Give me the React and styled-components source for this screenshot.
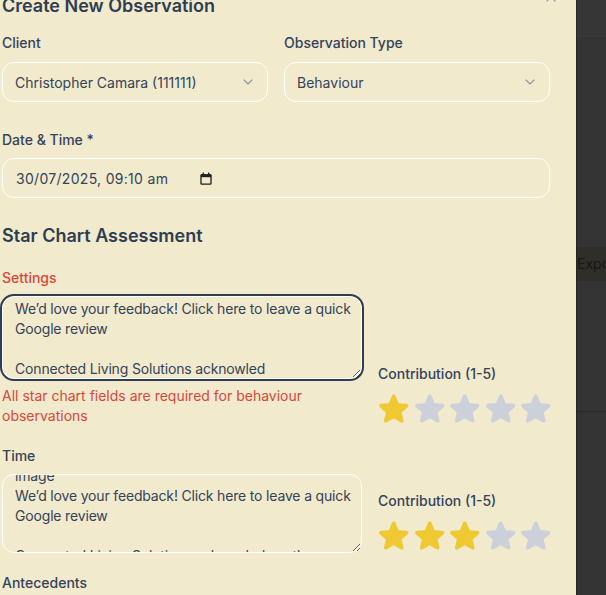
import React, { useLayoutEffect, useRef } from "react";
import styled, { createGlobalStyle } from "styled-components";

const GlobalStyle = createGlobalStyle`
  html, body {
    margin: 0;
    padding: 0;
    background: #333333;
  }
  body {
    font-family: Inter, "Noto Sans", "Liberation Sans", sans-serif;
  }
  * {
    box-sizing: border-box;
  }
`;

const Screen = styled.div`
  display: flex;
  width: 606px;
  height: 595px;
  overflow: hidden;
`;

const Panel = styled.div`
  width: 576px;
  flex-shrink: 0;
  height: 595px;
  overflow: hidden;
  background: #f1eacd;
  box-shadow: 1px 0 0 rgba(0, 0, 0, 0.25);
  position: relative;
  z-index: 1;
`;

const PanelInner = styled.div`
  padding: 24px 26px 40px 2px;
  color: #2f3d52;
`;

const Header = styled.div`
  display: flex;
  justify-content: space-between;
  align-items: flex-start;
  margin-bottom: 13px;
`;

const Title = styled.h2`
  margin: 0;
  font-size: 18px;
  line-height: 28px;
  font-weight: 600;
`;

const CloseButton = styled.button`
  border: 0;
  background: none;
  padding: 0;
  margin: -3px -9px 0 0;
  width: 16px;
  height: 16px;
  color: #9ca3af;
  display: flex;
`;

const TwoCol = styled.div`
  display: grid;
  grid-template-columns: 1fr 1fr;
  gap: 16px;
  margin-bottom: ${({ $mb }) => $mb || 0}px;
`;

const Field = styled.div`
  display: flex;
  flex-direction: column;
  margin-bottom: ${({ $mb }) => $mb || 0}px;
`;

const Label = styled.label`
  display: block;
  font-size: 14px;
  line-height: 20px;
  font-weight: 500;
  color: ${({ $error }) => ($error ? "#d9473b" : "#34435a")};
  margin-bottom: ${({ $mb }) => ($mb === undefined ? 8 : $mb)}px;
`;

const SelectWrap = styled.div`
  position: relative;
  height: 40px;
`;

const Select = styled.select`
  appearance: none;
  width: 100%;
  height: 40px;
  border: 1px solid #ffffff;
  border-radius: 12px;
  background: transparent;
  padding: 0 36px 0 12px;
  font-family: inherit;
  font-size: 14px;
  color: #34435a;
  outline: none;
`;

const Chevron = styled.span`
  position: absolute;
  right: 12px;
  top: 12px;
  display: flex;
  color: #8e929a;
  pointer-events: none;
`;

const DateField = styled.div`
  display: flex;
  align-items: center;
  height: 40px;
  border: 1px solid #ffffff;
  border-radius: 12px;
  padding: 0 12px 0 13px;
  font-size: 14px;
  color: #34435a;
`;

const DateText = styled.span`
  width: 184px;
  letter-spacing: 0.3px;
`;

const SectionTitle = styled.h3`
  margin: 0 0 18px;
  font-size: 18px;
  line-height: 28px;
  font-weight: 600;
`;

const StarRow = styled.div`
  display: grid;
  grid-template-columns: 1fr 172px;
  column-gap: 16px;
  align-items: end;
  margin-bottom: 20px;
`;

const TextArea = styled.textarea`
  display: block;
  width: 100%;
  height: ${({ $h }) => $h}px;
  border: 1px solid #ffffff;
  border-radius: 12px;
  background: transparent;
  padding: 8px 6px 8px 12px;
  font-family: inherit;
  font-size: 14px;
  line-height: 20px;
  letter-spacing: -0.17px;
  color: #34435a;
  resize: vertical;
  scrollbar-width: none;
  outline: ${({ $focused }) => ($focused ? "2px solid #2f3d52" : "none")};
  outline-offset: 0;
`;

const ErrorText = styled.p`
  margin: 7px 0 0;
  font-size: 14px;
  line-height: 20px;
  color: #d9473b;
`;

const Rating = styled.div`
  display: flex;
  flex-direction: column;
`;

const Stars = styled.div`
  display: flex;
  margin: 7px 0 0 -2px;
`;

const StarButton = styled.button`
  border: 0;
  background: none;
  padding: 0;
  width: 35.5px;
  height: 35.5px;
  display: flex;
  color: ${({ $on }) => ($on ? "#f0c832" : "#cbd0da")};
`;

const Backdrop = styled.div`
  flex: 1;
  display: flex;
  flex-direction: column;
  background: #333333;
`;

const BackTop = styled.div`
  height: 37px;
  background: #363636;
  border-bottom: 1px solid #3a3a3a;
`;

const BackBand = styled.div`
  margin-top: 210px;
  height: 34px;
  background: #2f2e2a;
  color: #171717;
  font-size: 14px;
  line-height: 34px;
  padding-left: 1px;
  white-space: nowrap;
  overflow: hidden;
`;

const BackLine = styled.div`
  margin-top: 130px;
  border-top: 1px solid #2a2822;
`;

const ChevronDown = () => (
  <svg width="16" height="16" viewBox="0 0 24 24" fill="none" stroke="currentColor" strokeWidth="1.6" strokeLinecap="round" strokeLinejoin="round">
    <path d="m6 9 6 6 6-6" />
  </svg>
);

const XIcon = () => (
  <svg width="16" height="16" viewBox="0 0 24 24" fill="none" stroke="currentColor" strokeWidth="2" strokeLinecap="round">
    <path d="M18 6 6 18M6 6l12 12" />
  </svg>
);

const CalendarIcon = () => (
  <svg width="12" height="13" viewBox="0 0 12 13">
    <rect x="1" y="3" width="10" height="9.2" fill="none" stroke="#1f1f1f" strokeWidth="1.3" rx="0.6" />
    <rect x="0.8" y="2.4" width="10.4" height="2.8" fill="#1f1f1f" />
    <rect x="2.6" y="0.6" width="1.4" height="2.2" fill="#1f1f1f" />
    <rect x="8" y="0.6" width="1.4" height="2.2" fill="#1f1f1f" />
  </svg>
);

const StarIcon = () => (
  <svg width="35.5" height="35.5" viewBox="0 0 24 24" fill="currentColor">
    <path d="M10.788 3.21c.448-1.077 1.976-1.077 2.424 0l2.082 5.006 5.404.434c1.164.093 1.636 1.545.749 2.305l-4.117 3.527 1.257 5.273c.271 1.136-.964 2.033-1.960 1.425L12 18.354 7.373 21.18c-.996.608-2.231-.29-1.96-1.425l1.257-5.273-4.117-3.527c-.887-.76-.415-2.212.749-2.305l5.404-.434 2.082-5.005Z" />
  </svg>
);

function StarRating({ value }) {
  return (
    <Rating>
      <Label $mb={0}>Contribution (1-5)</Label>
      <Stars>
        {[1, 2, 3, 4, 5].map((n) => (
          <StarButton key={n} $on={n <= value} type="button">
            <StarIcon />
          </StarButton>
        ))}
      </Stars>
    </Rating>
  );
}

const feedback =
  "We\u2019d love your feedback! Click here to leave a quick Google review\n\nConnected Living Solutions acknowled";

const timeText =
  "Attached:\nimage\nWe\u2019d love your feedback! Click here to leave a quick Google review\n\nConnected Living Solutions acknowledges the Traditional Custodians";

export default function App() {
  const panelRef = useRef(null);
  const settingsRef = useRef(null);
  const timeRef = useRef(null);

  useLayoutEffect(() => {
    if (panelRef.current) panelRef.current.scrollTop = 32;
    if (settingsRef.current) settingsRef.current.scrollTop = 6;
    if (timeRef.current) timeRef.current.scrollTop = 37;
  }, []);

  return (
    <>
      <GlobalStyle />
      <Screen>
        <Panel ref={panelRef}>
          <PanelInner>
            <Header>
              <Title>Create New Observation</Title>
              <CloseButton type="button">
                <XIcon />
              </CloseButton>
            </Header>

            <TwoCol $mb={28}>
              <Field>
                <Label $mb={9}>Client</Label>
                <SelectWrap>
                  <Select defaultValue="111111">
                    <option value="111111">Christopher Camara (111111)</option>
                  </Select>
                  <Chevron>
                    <ChevronDown />
                  </Chevron>
                </SelectWrap>
              </Field>
              <Field>
                <Label $mb={9}>Observation Type</Label>
                <SelectWrap>
                  <Select defaultValue="behaviour">
                    <option value="behaviour">Behaviour</option>
                  </Select>
                  <Chevron>
                    <ChevronDown />
                  </Chevron>
                </SelectWrap>
              </Field>
            </TwoCol>

            <Field $mb={24}>
              <Label>Date &amp; Time *</Label>
              <DateField>
                <DateText>30/07/2025, 09:10 am</DateText>
                <CalendarIcon />
              </DateField>
            </Field>

            <SectionTitle>Star Chart Assessment</SectionTitle>

            <StarRow>
              <div>
                <Label $error>Settings</Label>
                <TextArea ref={settingsRef} $h={83} $focused defaultValue={feedback} spellCheck={false} />
                <ErrorText>All star chart fields are required for behaviour observations</ErrorText>
              </div>
              <StarRating value={1} />
            </StarRow>

            <StarRow>
              <div>
                <Label>Time</Label>
                <TextArea ref={timeRef} $h={79} defaultValue={timeText} spellCheck={false} />
              </div>
              <StarRating value={3} />
            </StarRow>

            <Label>Antecedents</Label>
          </PanelInner>
        </Panel>
        <Backdrop>
          <BackTop />
          <BackBand>Export</BackBand>
          <BackLine />
        </Backdrop>
      </Screen>
    </>
  );
}
